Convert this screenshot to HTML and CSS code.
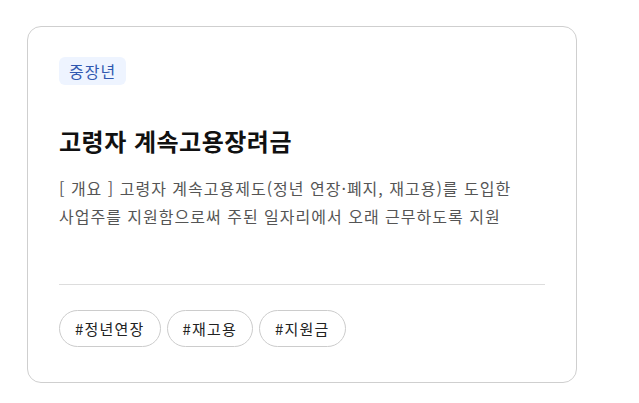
FILE: index.html
```html
<!DOCTYPE html>
<html lang="ko">
<head>
    <meta charset="utf-8">
    <meta name="viewport" content="width=device-width, initial-scale=1">
    <link rel="stylesheet" href="styles.css">
    <title>고령자 계속고용장려금</title>
</head>
<body>
    <div class="card">
        <span class="badge">중장년</span>
        <h2 class="title">고령자 계속고용장려금</h2>
        <p class="desc">[ 개요 ] 고령자 계속고용제도(정년 연장·폐지, 재고용)를 도입한 사업주를 지원함으로써 주된 일자리에서 오래 근무하도록 지원</p>
        <div class="tags">
            <span class="tag">#정년연장</span>
            <span class="tag">#재고용</span>
            <span class="tag">#지원금</span>
        </div>
    </div>
</body>
</html>
```

FILE: styles.css
```css
* { margin: 0; padding: 0; box-sizing: border-box; }
body { background: #fff; font-family: "Noto Sans CJK KR", "Noto Sans", sans-serif; color: #111; word-break: keep-all; }
.card { width: 550px; margin: 26px 0 0 27px; padding: 30px 31px 35px 31px; border: 1px solid #cfcfcf; border-radius: 14px; background: #fff; }
.badge { display: inline-flex; align-items: center; height: 28px; padding: 0 10px; border-radius: 6px; background: #eef4ff; color: #3058b0; font-size: 16px; letter-spacing: 1px; }
.title { margin-top: 40px; font-size: 24px; line-height: 32px; font-weight: 700; letter-spacing: 0.5px; color: #111; }
.desc { margin-top: 17px; font-size: 16px; line-height: 28px; letter-spacing: 1px; color: #555; }
.tags { display: flex; gap: 6px; margin-top: 54px; padding-top: 25px; border-top: 1px solid #ddd; }
.tag { display: inline-flex; align-items: center; height: 37px; padding: 0 15px; border: 1px solid #ccc; border-radius: 19px; font-size: 15px; letter-spacing: 1.2px; color: #222; }
```
